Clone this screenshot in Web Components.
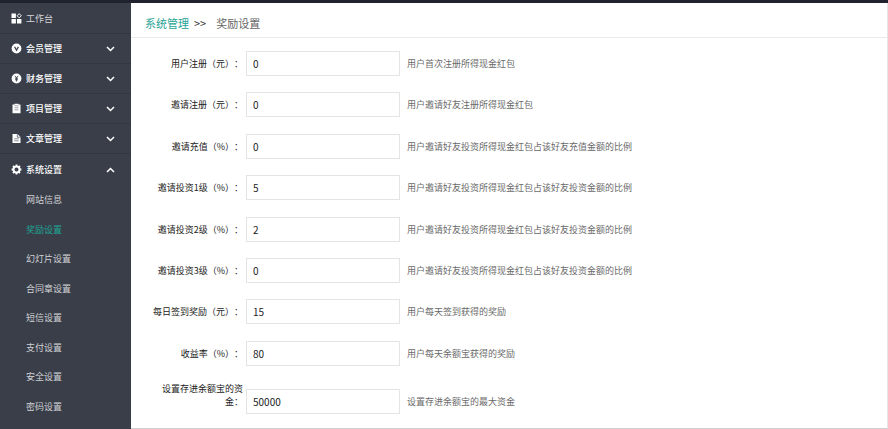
<!DOCTYPE html>
<html lang="zh-CN">
<head>
<meta charset="utf-8">
<title>奖励设置</title>
<style>
html, body { height: 100%; margin: 0; }
body { font-family: "Noto Sans CJK SC", sans-serif; font-size: 9px; text-spacing-trim: space-all; }
</style>
</head>
<body>
<admin-app>
  <side-nav slot="nav">
    <nav-item icon="grid" label="工作台"></nav-item>
    <nav-item icon="member" label="会员管理" arrow="down"></nav-item>
    <nav-item icon="money" label="财务管理" arrow="down"></nav-item>
    <nav-item icon="project" label="项目管理" arrow="down"></nav-item>
    <nav-item icon="article" label="文章管理" arrow="down"></nav-item>
    <nav-item icon="gear" label="系统设置" arrow="up"></nav-item>
    <sub-link slot="sub">网站信息</sub-link>
    <sub-link slot="sub" active>奖励设置</sub-link>
    <sub-link slot="sub">幻灯片设置</sub-link>
    <sub-link slot="sub">合同章设置</sub-link>
    <sub-link slot="sub">短信设置</sub-link>
    <sub-link slot="sub">支付设置</sub-link>
    <sub-link slot="sub">安全设置</sub-link>
    <sub-link slot="sub">密码设置</sub-link>
  </side-nav>
  <bread-crumb parent="系统管理">奖励设置</bread-crumb>
  <settings-form>
    <form-row label="用户注册（元）：" value="0">用户首次注册所得现金红包</form-row>
    <form-row label="邀请注册（元）：" value="0">用户邀请好友注册所得现金红包</form-row>
    <form-row label="邀请充值（%）：" value="0">用户邀请好友投资所得现金红包占该好友充值金额的比例</form-row>
    <form-row label="邀请投资1级（%）：" value="5">用户邀请好友投资所得现金红包占该好友投资金额的比例</form-row>
    <form-row label="邀请投资2级（%）：" value="2">用户邀请好友投资所得现金红包占该好友投资金额的比例</form-row>
    <form-row label="邀请投资3级（%）：" value="0">用户邀请好友投资所得现金红包占该好友投资金额的比例</form-row>
    <form-row label="每日签到奖励（元）：" value="15">用户每天签到获得的奖励</form-row>
    <form-row label="收益率（%）：" value="80">用户每天余额宝获得的奖励</form-row>
    <form-row tall label="设置存进余额宝的资金：" value="50000">设置存进余额宝的最大资金</form-row>
  </settings-form>
</admin-app>
<script>
const icons = {
  grid: '<path fill="currentColor" d="M.5.5h4.4v4.4H.5zM.5 6h4.4v4.4H.5zM6 6h4.4v4.4H6z"/><path fill="none" stroke="currentColor" d="M8.2.7l2.1 2.1-2.1 2.1-2.1-2.1z"/>',
  member: '<circle cx="5.5" cy="5.5" r="4.9" fill="currentColor"/><path d="M3.6 3.8l1.9 3.4 1.9-3.4" fill="none" stroke="#393e49" stroke-width="1.3"/>',
  money: '<circle cx="5.5" cy="5.5" r="4.9" fill="currentColor"/><path d="M3.8 2.8l1.7 2 1.7-2M5.5 4.8v3.6M4 5.2h3M4 6.8h3" fill="none" stroke="#393e49" stroke-width=".9"/>',
  project: '<path fill="currentColor" d="M1.5 1.5h2V.8h4v.7h2v8.7h-8z"/><path d="M3.5 2.8h4M3.5 4.8h4M3.5 6.8h4" stroke="#8b8e95" stroke-width=".8"/>',
  article: '<path fill="currentColor" d="M1.5 1h5l3 3v6h-8z"/><path d="M6.3 1.2v3h3" fill="none" stroke="#393e49" stroke-width=".7"/><path d="M3.2 5.8h4.6M3.2 7.8h4.6" stroke="#74777f" stroke-width=".8"/>',
  gear: '<circle cx="5.5" cy="5.5" r="3" fill="none" stroke="currentColor" stroke-width="2"/><path d="M5.5.6v1.6M5.5 8.8v1.6M.6 5.5h1.6M8.8 5.5h1.6M2 2l1.2 1.2M7.8 7.8L9 9M9 2L7.8 3.2M3.2 7.8L2 9" stroke="currentColor" stroke-width="1.8"/>'
};
const arrows = { down: 'M1 1l3.5 3.5L8 1', up: 'M1 5l3.5-3.5L8 5' };

class Base extends HTMLElement {
  connectedCallback() {
    if (!this.shadowRoot) this.attachShadow({ mode: 'open' }).innerHTML = this.render();
  }
}

customElements.define('admin-app', class extends Base {
  render() { return `<style>
    :host { display: flex; min-height: 100%; box-sizing: border-box; border-top: 3px solid #20232e; background: #fff; height: 100%; }
    ::slotted(side-nav) { flex: none; }
    main { flex: 1; min-width: 0; display: flex; flex-direction: column; box-sizing: border-box;
      border-right: 1px solid #e6e6e6; border-bottom: 1px solid #cfcfcf; }
  </style><slot name="nav"></slot><main><slot></slot></main>`; }
});

customElements.define('side-nav', class extends Base {
  render() { return `<style>
    :host { display: flex; flex-direction: column; width: 131px; background: #393e49; }
    .sub { flex: 1; display: grid; grid-auto-rows: minmax(26px, 1fr); padding-bottom: 8px; }
  </style><slot></slot><div class="sub"><slot name="sub"></slot></div>`; }
});

customElements.define('nav-item', class extends Base {
  render() {
    const a = this.getAttribute('arrow');
    return `<style>
    :host { display: block; border-bottom: 1px solid #323640; }
    :host([arrow]) { --w: 500; --c: #fff; }
    :host([arrow="up"]) { border-bottom: 0; }
    button { display: flex; align-items: center; gap: 4px; width: 100%; height: 30px; padding: 0 16px 0 11px;
      border: 0; background: none; color: #fff; font: inherit; text-align: left; cursor: pointer; }
    :host([arrow="down"]) button { height: 29px; }
    :host([arrow="up"]) button { height: 31px; }
    span { flex: 1; color: var(--c, #d5d6d9); font-weight: var(--w, 400); }
    svg { flex: none; display: block; }
  </style><button type="button"${a ? ` aria-expanded="${a === 'up'}"` : ''}>
    <svg width="11" height="11" viewBox="0 0 11 11" aria-hidden="true">${icons[this.getAttribute('icon')]}</svg>
    <span>${this.getAttribute('label')}</span>
    ${a ? `<svg width="9" height="6" viewBox="0 0 9 6" aria-hidden="true"><path d="${arrows[a]}" fill="none" stroke="#fff" stroke-width="1.5"/></svg>` : ''}
  </button>`; }
});

customElements.define('sub-link', class extends Base {
  render() { return `<style>
    :host { display: flex; align-items: center; padding-left: 26px; }
    a { color: #d0d1d4; text-decoration: none; }
    :host([active]) a { color: #1fa394; }
  </style><a href="#"><slot></slot></a>`; }
});

customElements.define('bread-crumb', class extends Base {
  render() { return `<style>
    :host { display: block; border-bottom: 1px solid #ebebeb; }
    nav { display: flex; align-items: center; gap: 5px; height: 34px; padding: 6px 14px 0; box-sizing: border-box; font-size: 11px; color: #666; }
    a { color: #1fa394; text-decoration: none; }
    i { font-style: normal; color: #333; padding-right: 5px; }
  </style><nav><a href="#">${this.getAttribute('parent')}</a><i>&gt;&gt;</i><span><slot></slot></span></nav>`; }
});

customElements.define('settings-form', class extends Base {
  render() { return `<style>
    :host { flex: 1; display: flex; }
    form { flex: 1; display: flex; flex-direction: column; justify-content: space-between; gap: 8px; padding: 13px 16px 14px; }
  </style><form><slot></slot></form>`; }
});

customElements.define('form-row', class extends Base {
  render() { return `<style>
    :host { display: grid; grid-template-columns: 96px minmax(80px, 154px) 1fr; column-gap: 3px; align-items: end; line-height: 13px; }
    label { padding: 6px 0; text-align: right; color: #222; }
    :host([tall]) label { padding-top: 0; }
    input { width: 100%; height: 25px; box-sizing: border-box; margin: 0; padding: 0 6px; border: 1px solid #e4e4e4;
      background: #fff; color: #222; font: inherit; font-size: 10px; outline: 0; }
    small { padding: 6px 0 6px 4px; font-size: 9px; color: #6a6a6a; }
  </style><label for="f">${this.getAttribute('label')}</label><input id="f" type="text" value="${this.getAttribute('value')}"><small><slot></slot></small>`; }
});
</script>
</body>
</html>
